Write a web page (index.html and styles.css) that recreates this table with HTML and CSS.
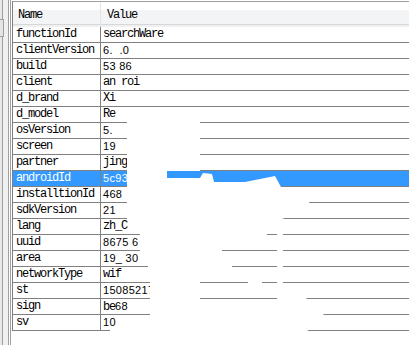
FILE: index.html
```html
<!DOCTYPE html>
<html>
<head>
<meta charset="utf-8">
<link rel="stylesheet" href="styles.css">
</head>
<body>
<div class="win">
  <div class="side"><div class="thumb"></div></div>
  <div class="list">
    <div class="head"><div class="c1">Name</div><div class="c2">Value</div></div>
    <div class="row"><div class="c1">functionId</div><div class="c2">searchWare</div></div>
    <div class="row"><div class="c1">clientVersion</div><div class="c2"><span class="n">6.&nbsp;&nbsp;.0</span></div></div>
    <div class="row"><div class="c1">build</div><div class="c2"><span class="n">53 86</span></div></div>
    <div class="row"><div class="c1">client</div><div class="c2">an roi</div></div>
    <div class="row"><div class="c1">d_brand</div><div class="c2">Xi</div></div>
    <div class="row"><div class="c1">d_model</div><div class="c2">Re</div></div>
    <div class="row"><div class="c1">osVersion</div><div class="c2"><span class="n">5.</span></div></div>
    <div class="row"><div class="c1">screen</div><div class="c2"><span class="n">19</span></div></div>
    <div class="row"><div class="c1">partner</div><div class="c2">jing</div></div>
    <div class="row sel"><div class="c1">androidId</div><div class="c2"><span class="n">5c93</span></div></div>
    <div class="row"><div class="c1">installtionId</div><div class="c2"><span class="n">468</span></div></div>
    <div class="row"><div class="c1">sdkVersion</div><div class="c2"><span class="n">21</span></div></div>
    <div class="row"><div class="c1">lang</div><div class="c2">zh_C</div></div>
    <div class="row"><div class="c1">uuid</div><div class="c2"><span class="n">8675 6</span></div></div>
    <div class="row"><div class="c1">area</div><div class="c2"><span class="n">19_ 30</span></div></div>
    <div class="row"><div class="c1">networkType</div><div class="c2">wif</div></div>
    <div class="row"><div class="c1">st</div><div class="c2"><span class="n">15085217</span></div></div>
    <div class="row"><div class="c1">sign</div><div class="c2">be<span class="n">68</span></div></div>
    <div class="row"><div class="c1">sv</div><div class="c2"><span class="n">10</span></div></div>
  </div>
  <svg class="scribble" width="409" height="345" viewBox="0 0 409 345">
    <g fill="#fff">
      <path d="M127 110 L200 110 L200 171 L167 171 L167 178 L200 178 L203 173 L212 174 L214 182 L245 182 L275 176 L281 187 L296 195 L310 203 L300 212 L282 219 L200 221 L200 300 L150 300 L150 219 L127 219 Z"/>
      <path d="M140 219 L160 219 L160 236 L140 236 Z"/>
      <path d="M140 244 L160 244 L160 270 L148 270 L148 252 L140 252 Z"/>
      <path d="M200 225 L267 230 L267 240 L200 238 Z"/>
      <path d="M200 246 L222 246 L222 256 L200 256 Z"/>
      <path d="M200 262 L232 262 L232 272 L200 272 Z"/>
      <path d="M248 278 L262 278 L262 288 L248 288 Z"/>
      <path d="M277 219 L283 219 L283 300 L277 300 Z"/>
      <path d="M150 300 L277 300 L320 322 L300 336 L110 336 L110 329 L122 329 L122 316 L150 316 Z"/>
      <path d="M277 292 L303 296 L325 312 L320 320 L300 318 L277 304 Z"/>
    </g>
  </svg>
</div>
</body>
</html>
```
FILE: styles.css
```css
html, body {
  margin: 0;
  padding: 0;
  background: #fff;
}
.win {
  position: relative;
  width: 409px;
  height: 345px;
  overflow: hidden;
  display: flex;
  background: #fff;
}
.side {
  position: relative;
  width: 12px;
  flex: none;
  background: linear-gradient(to right,
    #e8e8e8 0, #e8e8e8 2px,
    #a0a0a0 2px, #a0a0a0 3px,
    #f0f0f0 3px, #f0f0f0 8px,
    #a0a0a0 8px, #a0a0a0 9px,
    #ffffff 9px, #ffffff 10px,
    #a0a0a0 10px, #a0a0a0 11px,
    #ffffff 11px, #ffffff 12px);
}
.thumb {
  position: absolute;
  left: -1px;
  top: 19px;
  width: 3px;
  height: 16px;
  border: 1px solid #a0a0a0;
  background: #e4e4e4;
}
.list {
  flex: 1;
  border-left: 1px solid #808080;
  border-top: 1px solid #a0a0a0;
  margin-top: 1px;
  font-family: "Liberation Mono", "DejaVu Sans Mono", monospace;
  font-size: 12px;
  letter-spacing: -1.2px;
  color: #000;
  align-self: flex-start;
}
.head {
  display: flex;
  height: 25px;
  background: linear-gradient(to bottom, #ffffff 0, #ffffff 8px, #f3f4f6 8px, #f3f4f6 22px, #d6d7d9 22px, #d6d7d9 23px, #f0f0f0 23px);
  line-height: 26px;
}
.head .c1 {
  width: 88px;
  padding-left: 5px;
  box-sizing: border-box;
  border-right: 1px solid #e3e4e6;
}
.head .c2 {
  padding-left: 6px;
}
.row {
  display: flex;
  height: 16px;
  box-sizing: border-box;
  border-bottom: 1px solid #808080;
  line-height: 15px;
}
.row .c1 {
  width: 88px;
  flex: none;
  padding-left: 3px;
  box-sizing: border-box;
  border-right: 1px solid #808080;
  white-space: nowrap;
}
.row .c2 {
  padding-left: 2px;
  white-space: pre;
}
.row.sel {
  background: #3399ff;
  color: #fff;
}
.n {
  font-family: "Liberation Sans", Arial, sans-serif;
  font-size: 11px;
  letter-spacing: 0.3px;
}
.scribble {
  position: absolute;
  left: 0;
  top: 0;
  pointer-events: none;
}
```
